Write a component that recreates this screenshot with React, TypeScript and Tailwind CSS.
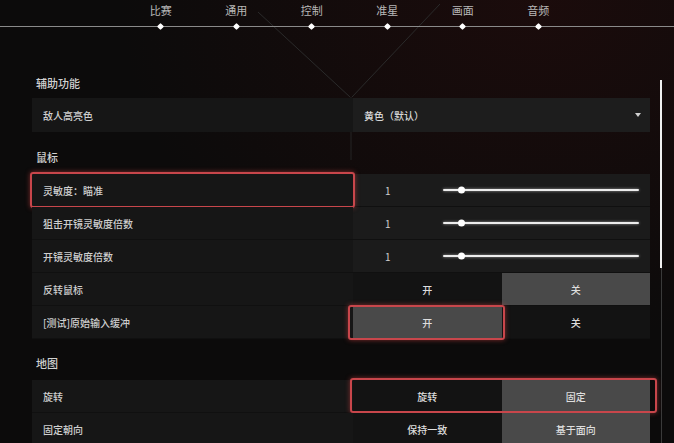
import React from 'react';

const tabs = ['比赛', '通用', '控制', '准星', '画面', '音频'];

function Highlight({ className }: { className: string }) {
  return (
    <div
      className={`pointer-events-none absolute rounded-[3px] border-2 border-[#c8464b] shadow-[0_0_5px_rgba(220,70,70,0.55)] ${className}`}
    />
  );
}

function SectionTitle({ title, className }: { title: string; className: string }) {
  return (
    <div className={`h-[16px] pl-[4px] text-[11px] font-medium leading-[16px] text-[#d2d2d2] ${className}`}>{title}</div>
  );
}

function Label({ text, children }: { text: string; children?: React.ReactNode }) {
  return (
    <div className="relative flex w-[321px] items-center bg-[#161616] pl-[11px] text-[10px] font-medium text-[#cfcfcf]">
      {text}
      {children}
    </div>
  );
}

function SliderRow({ label, highlight }: { label: string; highlight?: boolean }) {
  return (
    <div className="flex h-[33px] border-b border-[#101010]">
      <Label text={label}>{highlight && <Highlight className="-inset-[2px]" />}</Label>
      <div className="flex flex-1 items-center bg-[#1b1b1b] pl-[32px] pr-[11px]">
        <span className="w-[58px] text-[10px] text-[#cfcfcf]">1</span>
        <div className="relative h-[2px] flex-1 rounded-full bg-[#ececec] shadow-[0_0_3px_rgba(255,255,255,0.6)]">
          <div className="absolute left-[15px] top-1/2 h-[7px] w-[7px] -translate-y-1/2 rounded-full bg-white" />
        </div>
      </div>
    </div>
  );
}

function ToggleRow({
  label,
  options,
  selected,
  children,
}: {
  label: string;
  options: [string, string];
  selected: 0 | 1;
  children?: React.ReactNode;
}) {
  return (
    <div className="flex h-[33px] border-b border-[#101010]">
      <Label text={label} />
      <div className="relative flex flex-1">
        {options.map((o, i) => (
          <div
            key={o}
            className={`relative flex flex-1 items-center justify-center text-[10px] font-medium text-[#dedede] ${
              i === selected ? 'bg-[#494949]' : 'bg-[#131313]'
            }`}
          >
            {o}
          </div>
        ))}
        {children}
      </div>
    </div>
  );
}

export default function App() {
  return (
    <div
      className="relative h-[443px] w-[674px] overflow-hidden bg-[#0c0b0b] bg-[radial-gradient(ellipse_at_80%_0%,rgba(55,12,12,0.35),transparent_55%)]"
      style={{ fontFamily: '"Noto Sans CJK SC", "Noto Sans", sans-serif' }}
    >
      {/* background decoration */}
      <svg className="pointer-events-none absolute inset-0" width="674" height="443">
        <line x1="258" y1="12" x2="350" y2="97" stroke="#2a2a2a" strokeWidth="1" />
        <line x1="440" y1="4" x2="352" y2="97" stroke="#2a2a2a" strokeWidth="1" />
        <line x1="351" y1="97" x2="351" y2="160" stroke="#242424" strokeWidth="1" />
      </svg>

      {/* tabs */}
      <div className="relative h-[40px]">
        <div className="absolute left-0 right-0 top-[26px] h-px bg-[#8a8a8a]" />
        <div className="flex pl-[123px]">
          {tabs.map((t) => (
            <div key={t} className="flex w-[75.5px] flex-col items-center">
              <span className="mt-[3px] h-[14px] text-[11px] leading-[14px] text-[#b8b8b8]">{t}</span>
              <span className="relative mt-[7px] h-[5px] w-[5px] rotate-45 rounded-[1px] bg-white" />
            </div>
          ))}
        </div>
      </div>

      <div className="relative flex">
        <div className="ml-[32px] w-[618px]">
          <SectionTitle title="辅助功能" className="mt-[35px]" />
          <div className="mt-[7px] flex h-[34px]">
            <Label text="敌人高亮色" />
            <div className="flex flex-1 items-center justify-between bg-[#1d1d1d] pl-[11px] pr-[9px] text-[10px] font-medium text-[#d6d6d6]">
              <span>黄色（默认）</span>
              <span className="h-0 w-0 border-x-[3px] border-t-[4px] border-x-transparent border-t-[#d0d0d0]" />
            </div>
          </div>

          <SectionTitle title="鼠标" className="mt-[17px]" />
          <div className="mt-[9px]">
            <SliderRow label="灵敏度：瞄准" highlight />
            <SliderRow label="狙击开镜灵敏度倍数" />
            <SliderRow label="开镜灵敏度倍数" />
            <ToggleRow label="反转鼠标" options={['开', '关']} selected={1} />
            <ToggleRow label="[测试]原始输入缓冲" options={['开', '关']} selected={0}>
              <Highlight className="-left-[5px] -top-[1px] bottom-[-2px] w-[157px]" />
            </ToggleRow>
          </div>

          <SectionTitle title="地图" className="mt-[16px]" />
          <div className="mt-[9px]">
            <ToggleRow label="旋转" options={['旋转', '固定']} selected={1}>
              <Highlight className="-left-[3px] -right-[7px] -top-[2px] -bottom-[1px]" />
            </ToggleRow>
            <ToggleRow label="固定朝向" options={['保持一致', '基于面向']} selected={1} />
          </div>
        </div>

        {/* scrollbar */}
        <div className="ml-[10px] flex flex-col pt-[40px]">
          <div className="h-[188px] w-[2px] bg-[#f0f0f0]" />
          <div className="ml-[0.5px] h-[200px] w-px bg-[#3a3a3a]" />
        </div>
      </div>
    </div>
  );
}
